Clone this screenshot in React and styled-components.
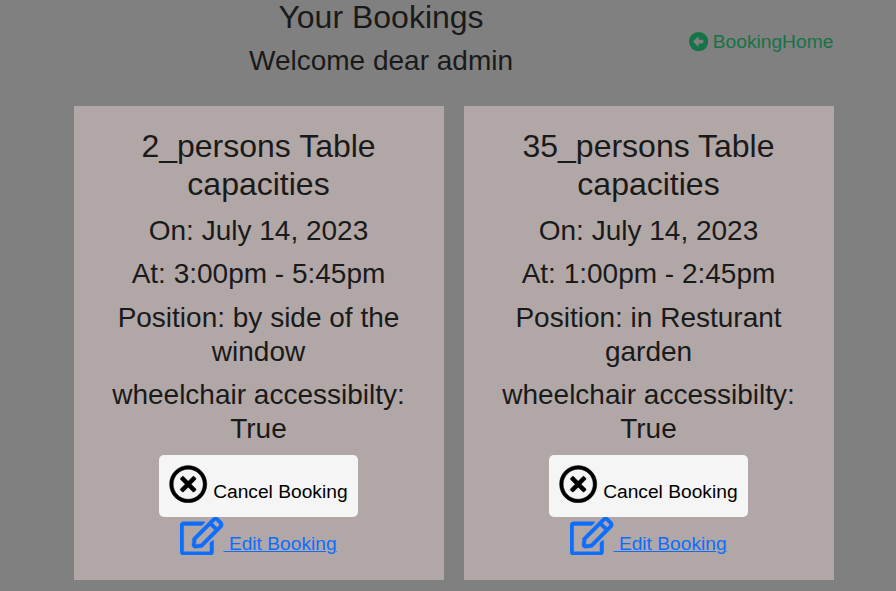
import React from "react";
import styled, { createGlobalStyle } from "styled-components";
import { FaRegTimesCircle, FaRegEdit } from "react-icons/fa";
import { FaCircleLeft } from "react-icons/fa6";

const GlobalStyle = createGlobalStyle`
  *, *::before, *::after { box-sizing: border-box; }
  html, body { margin: 0; height: 100%; background: #808080; overflow: hidden; }
  body {
    font-family: "Liberation Sans", Arial, sans-serif;
    font-size: 19.2px;
    line-height: 1.5;
    color: #1a1a1a;
  }
`;

const Page = styled.main`
  width: 760px;
  margin-left: 74px;
`;

const Header = styled.header`
  display: grid;
  grid-template-columns: 614px auto;
  height: 106px;
`;

const Heading = styled.div`
  margin-top: -2px;
  text-align: center;
`;

const Title = styled.h2`
  margin: 0 0 ${({ $gap }) => $gap || "8px"};
  font-size: 32px;
  font-weight: 400;
  line-height: 38.4px;
`;

const Line = styled.h3`
  margin: 0 0 9.5px;
  font-size: 28px;
  font-weight: 400;
  line-height: 34px;
`;

const HomeLink = styled.a`
  display: flex;
  align-items: center;
  gap: 5px;
  height: 29px;
  margin: 28px 0 0 0.6px;
  color: #157347;
  text-decoration: none;
  white-space: nowrap;

  svg { margin-bottom: 2px; }
`;

const Cards = styled.section`
  display: grid;
  grid-template-columns: repeat(2, 370px);
  gap: 20px;
`;

const Card = styled.article`
  height: 474px;
  padding: 21px 31px 0 30px;
  background: #b1a7a6;
  text-align: center;
`;

const Details = styled.div`
  height: 328px;
`;

const CancelButton = styled.button`
  display: block;
  width: 199px;
  height: 62px;
  margin: 0 auto;
  padding: 0;
  border: 0;
  border-radius: 5px;
  background: #f5f5f5;
  color: #000;
  font: inherit;
  white-space: nowrap;

  svg {
    stroke-width: 6px;
    vertical-align: -5.4px;
  }
`;

const EditLink = styled.a`
  display: block;
  color: #0d6efd;
  line-height: 29px;
  text-decoration: underline;
  text-decoration-thickness: 1px;
  text-underline-offset: 1px;
  white-space: pre;

  svg {
    width: 43.2px;
    height: 38.4px;
    stroke-width: 6px;
    vertical-align: -5.8px;
  }
`;

const bookings = [
  { capacity: "2_persons", time: "3:00pm - 5:45pm", position: "by side of the window" },
  { capacity: "35_persons", time: "1:00pm - 2:45pm", position: "in Resturant garden" },
];

function BookingCard({ capacity, time, position }) {
  return (
    <Card>
      <Details>
        <Title $gap="10px">{capacity} Table capacities</Title>
        <Line>On: July 14, 2023</Line>
        <Line>At: {time}</Line>
        <Line>Position: {position}</Line>
        <Line>wheelchair accessibilty: True</Line>
      </Details>
      <CancelButton>
        <FaRegTimesCircle size="38.4" /> Cancel Booking
      </CancelButton>
      <EditLink href="#edit">
        <FaRegEdit />{" Edit Booking"}
      </EditLink>
    </Card>
  );
}

export default function App() {
  return (
    <>
      <GlobalStyle />
      <Page>
        <Header>
          <Heading>
            <Title>Your Bookings</Title>
            <Line>Welcome dear admin</Line>
          </Heading>
          <HomeLink href="#home">
            <FaCircleLeft size="19.2" />
            BookingHome
          </HomeLink>
        </Header>
        <Cards>
          {bookings.map((booking) => (
            <BookingCard key={booking.capacity} {...booking} />
          ))}
        </Cards>
      </Page>
    </>
  );
}
